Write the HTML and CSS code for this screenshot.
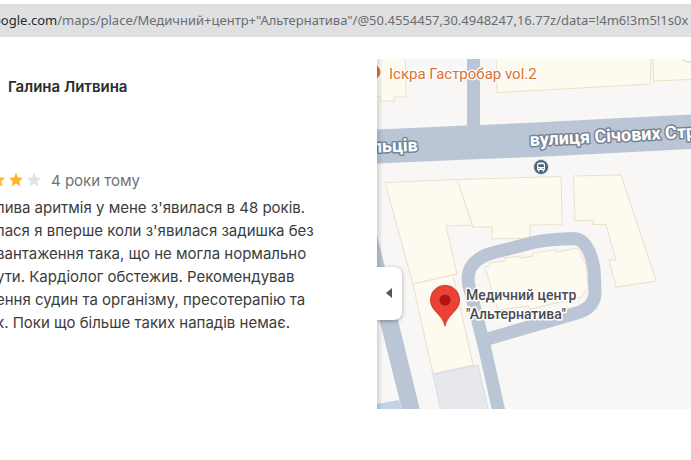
FILE: index.html
```html
<!DOCTYPE html>
<html lang="uk">
<head>
<meta charset="utf-8">
<title>Медичний центр "Альтернатива"</title>
<link rel="stylesheet" href="styles.css">
</head>
<body>
<header class="address-bar">
  <div class="url"><span class="host">oogle.com</span>/maps/place/Медичний+центр+"Альтернатива"/@50.4554457,30.4948247,16.77z/data=!4m6!3m5!1s0x</div>
</header>
<main class="content">
  <article class="review">
    <h1 class="author">Галина Литвина</h1>
    <div class="rating">
      <svg class="stars" viewBox="0 0 41 16" aria-hidden="true">
        <defs><path id="star" d="M0-7.5 2-2.5 7.2-2.2 3.2 1.2 4.5 6.5 0 3.6-4.5 6.5-3.2 1.2-7.2-2.2-2-2.5Z"/></defs>
        <use href="#star" x="-2" y="7" class="star-on"/>
        <use href="#star" x="16" y="7" class="star-on"/>
        <use href="#star" x="34" y="7" class="star-off"/>
      </svg>
      <span class="age">4 роки тому</span>
    </div>
    <p class="text">лива аритмія у мене з'явилася в 48 років.<br>лася я вперше коли з'явилася задишка без<br>вантаження така, що не могла нормально<br>ути. Кардіолог обстежив. Рекомендував<br>ення судин та організму, пресотерапію та<br>к. Поки що більше таких нападів немає.</p>
  </article>
  <section class="map">
    <svg class="map-canvas" viewBox="377 59 314 350" preserveAspectRatio="xMinYMin slice">
      <rect class="ground" x="377" y="59" width="2000" height="350"/>
      <g class="building">
        <path d="M370 50H405L406 97H394V101H381L380 97H370Z"/>
        <path d="M496 50 497 92.500 650 84 651 50Z"/>
        <path d="M652.500 50 653.500 81 700 79V50Z"/>
        <path d="M385 182.500 457 179.500 472 225 446 226 457 274 413 284Z"/>
        <path d="M457 179.500 561 176.500 562 224.500 530 225V238L492 239V227H473Z"/>
        <path d="M413 284 453 275 473 365 433 374Z"/>
        <path d="M573.500 176 621 175 656 281 616 287 609 260H616L606 224.500H593V220L575 221Z"/>
        <path d="M485 267 490 266V263L505 261V258L520 256V258L533 256V253L556 249.500V252L578 248 586 265 588 290 583 293 581 297 530 309 528 306 498 310Z"/>
      </g>
      <path class="annex" d="M433 374 478 365 489 412H441Z"/>
      <g class="road">
        <path d="M467 50H480V125L535 122.500 691 114.500 800 109V143L691 149 535 157 480 159 377 163.500V129.500L467 125.500Z"/>
        <path d="M377 235 398 320 420 410H402L377 310Z"/>
      </g>
      <path class="lane" d="M499 412 484 345 469 286C465 268 475 258 492 253L535 242Q552 239 574 238.500C586 239 592 255 594 270L595 292Q595 306 580 312L484 340"/>
      <path class="water" d="M377 404 399 400 402 410H377Z"/>
      <circle class="poi-food" cx="373" cy="72" r="8.500"/>
      <circle class="poi-edge" cx="688" cy="56" r="6"/>
      <g>
        <circle class="bus" cx="541" cy="167" r="7.500"/>
        <path class="bus-glyph" fill-rule="evenodd" d="M537 165Q537 162.500 539 162.500H543Q545 162.500 545 165V170H544V171.500H542.500V170H539.500V171.500H538V170H537ZM538.200 164.300V167H543.800V164.300ZM538.300 168V169H539.500V168ZM542.500 168V169H543.700V168Z"/>
      </g>
      <text class="label food" x="389" y="79">Іскра Гастробар vol.2</text>
      <text class="label street" text-anchor="end" transform="translate(418 151) rotate(-2)">льців</text>
      <text class="label street" transform="translate(530 146) rotate(-3)">вулиця Січових Стр</text>
      <path class="pin" d="M445 326C443 314 430.500 311 430.500 300A14.500 14.500 0 0 1 459.500 300C459.500 311 447 314 445 326Z"/>
      <circle class="pin-dot" cx="445" cy="300" r="5.500"/>
      <text class="label place" x="466" y="300">Медичний центр</text>
      <text class="label place" x="466" y="319">"Альтернатива"</text>
    </svg>
    <button class="collapse" type="button" aria-label="Згорнути бічну панель">
      <svg viewBox="0 0 6 10" width="6" height="10"><path d="M6 0V10L0 5Z"/></svg>
    </button>
  </section>
</main>
</body>
</html>
```
FILE: styles.css
```css
body {
  margin: 0;
  padding-top: 4px;
  background: #fff;
  overflow-x: hidden;
}

.address-bar {
  overflow: hidden;
  background: #dfe0e1;
}

.url {
  margin-left: -7px;
  font: 13px/33px "Noto Sans", "Open Sans", sans-serif;
  color: #6b6c6e;
  white-space: nowrap;
}

.host {
  color: #292b2d;
}

.content {
  display: grid;
  grid-template-columns: 6fr 5fr;
  padding-top: 22px;
}

.review {
  overflow: hidden;
  font-family: Inter, Roboto, sans-serif;
  font-size: 15px;
  color: #3c3c3c;
}

.author {
  margin: 16px 0 0 8px;
  font-size: 15px;
  line-height: 24px;
  font-weight: 600;
  color: #2a2b2e;
}

.rating {
  display: flex;
  align-items: center;
  gap: 10px;
  margin-top: 70px;
  line-height: 24px;
  color: #707275;
}

.stars {
  width: 41px;
  height: 16px;
}

.star-on { fill: #fdb52b; }
.star-off { fill: #e0e2e4; }

.text {
  margin: 3px 0 0 -4px;
  line-height: 23px;
  white-space: nowrap;
}

.map {
  position: relative;
  height: 350px;
  overflow: hidden;
}

.map::after {
  content: "";
  position: absolute;
  inset: 0 auto 0 0;
  width: 6px;
  background: linear-gradient(90deg, #0002, #0000);
}

.map-canvas {
  display: block;
  width: 100%;
  height: 100%;
}

.ground { fill: #f8f7f6; }

.building path {
  fill: #fdfaef;
  stroke: #ebe1ca;
}

.annex {
  fill: #e7e8ec;
  stroke: #d9dce4;
}

.road { fill: #bac6d5; }

.lane {
  fill: none;
  stroke: #bac6d5;
  stroke-width: 13;
}

.water { fill: #c0d4e6; }

.poi-food {
  fill: #e37432;
  stroke: #fff;
  stroke-width: 2;
}

.poi-edge {
  fill: #fff;
  stroke: #c9c9c9;
}

.bus {
  fill: #4b647c;
  stroke: #dfe5ea;
}

.bus-glyph { fill: #fff; }

.label {
  font-family: Roboto, sans-serif;
  paint-order: stroke;
  stroke: #fff;
  stroke-width: 3px;
  stroke-linejoin: round;
}

.food {
  font-size: 15px;
  fill: #dc7030;
}

.street {
  font-size: 18px;
  font-weight: 700;
  fill: #fff;
  stroke: #758396;
}

.place {
  font-size: 14px;
  font-weight: 500;
  fill: #4b4b4b;
}

.pin {
  fill: #ea4335;
  stroke: #d23a2e;
}

.pin-dot { fill: #b31412; }

.collapse {
  position: absolute;
  z-index: 1;
  left: 0;
  top: 208px;
  width: 25px;
  height: 53px;
  padding: 0;
  border: 0;
  border-radius: 0 8px 8px 0;
  background: #fff;
  box-shadow: 0 1px 4px #0005;
}

.collapse path { fill: #555; }
```
